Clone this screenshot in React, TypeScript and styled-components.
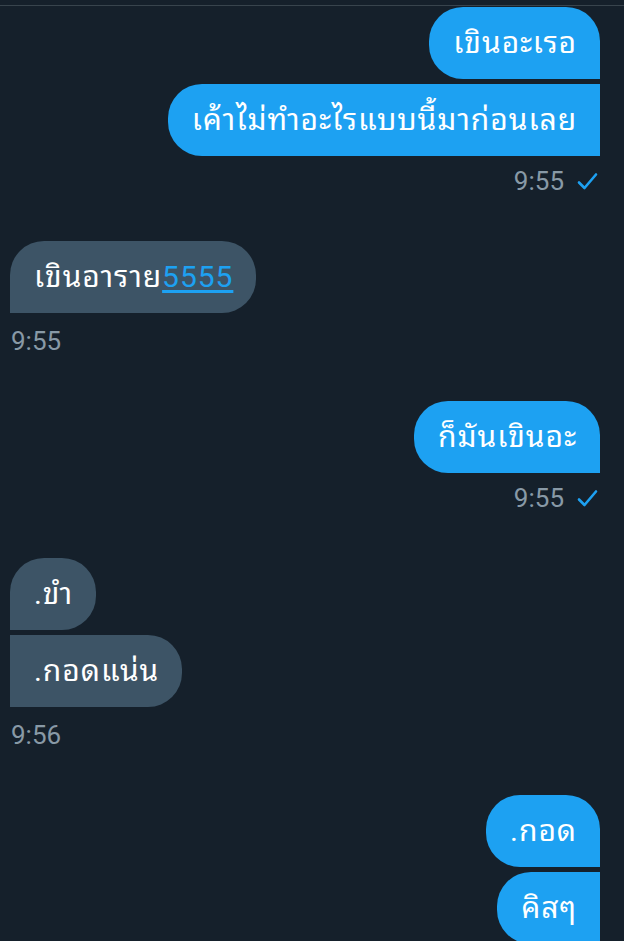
import React from 'react'
import styled, { createGlobalStyle, css } from 'styled-components'

const GlobalStyle = createGlobalStyle`
  html, body {
    margin: 0;
    padding: 0;
    background: #15202b;
  }
  body {
    font-family: Roboto, "Noto Sans Thai Looped", "Noto Sans Thai", "Noto Sans", sans-serif;
    -webkit-font-smoothing: antialiased;
  }
`

type Side = 'sent' | 'received'

const Page = styled.div`
  width: 624px;
  height: 941px;
  overflow: hidden;
  padding-top: 5px;
  box-sizing: border-box;
  background: #15202b;
`

const Thread = styled.div`
  border-top: 1px solid #38444d;
  padding-top: 1px;
  display: flex;
  flex-direction: column;
`

const Group = styled.div<{ $side: Side }>`
  display: flex;
  flex-direction: column;
  gap: 5px;
  margin-bottom: 45px;
  ${x =>
    x.$side === 'sent'
      ? css`
          align-items: flex-end;
          padding-right: 24px;
        `
      : css`
          align-items: flex-start;
          padding-left: 10px;
        `}
`

const Bubble = styled.div<{ $side: Side; $first: boolean }>`
  font-size: 30px;
  line-height: 32px;
  letter-spacing: 0.95px;
  padding: 20px 23px 20px 24px;
  color: #ffffff;
  white-space: nowrap;
  border-radius: 34px;
  background: ${x => (x.$side === 'sent' ? '#1da1f2' : '#3d5466')};
  ${x =>
    x.$side === 'sent'
      ? css`
          border-bottom-right-radius: 0;
          border-top-right-radius: ${x.$first ? '34px' : '0'};
        `
      : css`
          border-bottom-left-radius: 0;
          border-top-left-radius: ${x.$first ? '34px' : '0'};
        `}
`

const Link = styled.a`
  color: #1da1f2;
  text-decoration: underline;
  text-underline-offset: 3px;
`

const Meta = styled.div<{ $side: Side }>`
  display: flex;
  align-items: center;
  gap: 13px;
  font-size: 26px;
  line-height: 30px;
  color: #8899a6;
  margin-top: ${x => (x.$side === 'sent' ? '5px' : '8px')};
  padding-right: ${x => (x.$side === 'sent' ? '2px' : '0')};
  padding-left: ${x => (x.$side === 'received' ? '1px' : '0')};
`

const Check = () => (
  <svg width="21" height="19" viewBox="0 0 21 19" fill="none">
    <path
      d="M2 10.5 L7.5 16 L19 2.5"
      stroke="#1da1f2"
      strokeWidth="2.6"
      strokeLinecap="round"
      strokeLinejoin="round"
    />
  </svg>
)

interface Message {
  side: Side
  texts: React.ReactNode[]
  time?: string
}

const messages: Message[] = [
  {
    side: 'sent',
    texts: ['เขินอะเรอ', 'เค้าไม่ทำอะไรแบบนี้มาก่อนเลย'],
    time: '9:55',
  },
  {
    side: 'received',
    texts: [
      <>
        เขินอาราย<Link href="#">5555</Link>
      </>,
    ],
    time: '9:55',
  },
  { side: 'sent', texts: ['ก็มันเขินอะ'], time: '9:55' },
  { side: 'received', texts: ['.ขำ', '.กอดแน่น'], time: '9:56' },
  { side: 'sent', texts: ['.กอด', 'คิสๆ'] },
]

export default function App() {
  return (
    <>
      <GlobalStyle />
      <Page>
        <Thread>
          {messages.map((m, i) => (
            <Group key={i} $side={m.side}>
              {m.texts.map((t, j) => (
                <Bubble key={j} $side={m.side} $first={j === 0}>
                  {t}
                </Bubble>
              ))}
              {m.time && (
                <Meta $side={m.side}>
                  <span>{m.time}</span>
                  {m.side === 'sent' && <Check />}
                </Meta>
              )}
            </Group>
          ))}
        </Thread>
      </Page>
    </>
  )
}
